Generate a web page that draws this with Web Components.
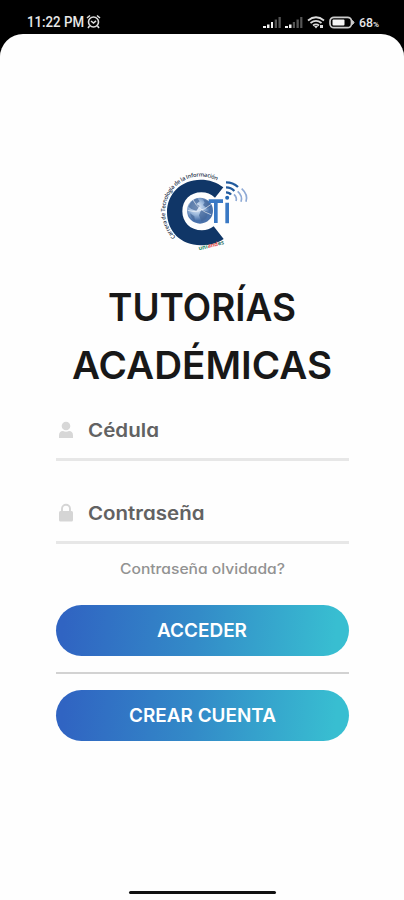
<!DOCTYPE html>
<html lang="es"><head><meta charset="utf-8"><title>Tutorías Académicas</title>
<style>html,body{margin:0;background:#fff}body{width:404px;height:900px;overflow:hidden}</style></head><body>
<login-screen></login-screen>
<script>
const define = (name, html, setup) => customElements.define(name, class extends HTMLElement {
  connectedCallback() {
    if (this.shadowRoot) return;
    const t = document.createElement('template');
    t.innerHTML = html;
    this.attachShadow({mode: 'open'}).append(t.content.cloneNode(true));
    if (setup) setup.call(this, this.shadowRoot);
  }
});

// A line of text set to an exact width; "base" is the baseline inside the box.
define('fit-text', `<style>:host{display:block;flex:none}svg{display:block;overflow:visible}
text{font-family:Inter,"Open Sans",sans-serif;font-feature-settings:"cv11" 1;fill:currentColor}</style>
<svg><text></text></svg>`, function (r) {
  const a = n => this.getAttribute(n), s = r.querySelector('svg'), t = r.querySelector('text');
  s.setAttribute('width', a('w')); s.setAttribute('height', a('h'));
  t.setAttribute('y', a('base')); t.setAttribute('textLength', a('w'));
  t.setAttribute('lengthAdjust', 'spacingAndGlyphs');
  t.style.fontSize = a('size') + 'px'; t.style.fontWeight = a('weight') || 600;
  if (a('face')) t.style.fontFamily = a('face');
  t.textContent = a('text');
});

define('status-bar', `<style>:host{display:flex;box-sizing:border-box;height:34px;padding:13px 25px 0 27px;justify-content:space-between;align-items:flex-start;color:#e8e8e8}
div{display:flex}svg{display:block;flex:none}.l{gap:2px}</style>
<div class="l"><fit-text text="11:22 PM" w="57" h="18" base="14" size="13.8" weight="500" face="Roboto"></fit-text>
<svg width="15" height="18" viewBox="0 0 15 18" fill="none" stroke="#ddd" stroke-width="1.6"><circle cx="7.5" cy="9" r="5"/><path d="M1 5 4 2.5M11 2.5 14 5M3.5 13 2 15M11.5 13l1.500 2M5 8l2.500 2L10 7.800"/></svg></div>
<div><svg width="97" height="18" viewBox="0 0 97 18">
<g fill="#f2f2f2"><path d="M1 13h3v2H1zM5 11.500h2.500V15H5zM9 9h2v6H9zM23 13h3v2h-3zM27 11.500h2.500V15H27z"/></g>
<g fill="#555"><path d="M12.700 6.500h2.300V15h-2.300zM16.500 4h2.300v11h-2.300zM30.800 9H33v6h-2.200zM34.500 6.500h2.300V15h-2.300zM38.200 4h2.200v11h-2.200z"/></g>
<g fill="none" stroke="#ddd" stroke-width="1.800"><path d="M46 7.500Q54 1 62 7.500M48.500 10Q54 5.800 59.500 10M51 12.400Q54 10.200 57 12.400"/></g>
<path d="M52 13h4l-2 2.500zM58 12h3v3h-3z" fill="#ddd"/>
<rect x="68" y="4.300" width="21.500" height="10.400" rx="4" fill="none" stroke="#ccc" stroke-width="1.700"/><rect x="70.500" y="6.500" width="12" height="6" rx="1" fill="#f4f4f4"/><path d="M90.500 7.500q3 2 0 4z" fill="#ccc" stroke="#ccc"/></svg>
<fit-text text="68" w="14" h="18" base="14" size="13" weight="500" face="Roboto"></fit-text><fit-text text="%" w="6" h="18" base="14" size="7" face="Roboto"></fit-text></div>`);

define('cti-logo', `<style>:host{display:block;width:104px;height:100px}svg{display:block;overflow:visible}text{font-family:"Open Sans",sans-serif;font-weight:600}</style>
<svg width="104" height="100" viewBox="0 0 312 300"><defs>
<path id="arc" d="M71 225A106 106 0 0 1 199 58"/>
<radialGradient id="g" cx=".38" cy=".38"><stop offset="0" stop-color="#f1f7ff"/><stop offset=".55" stop-color="#9db9dc"/><stop offset="1" stop-color="#4971aa"/></radialGradient></defs>
<path d="M214 76C195 61 171 53 146 53C87 53 45 96 45 151C45 208 87 250 146 250C173 250 197 243 215 231L185 193C174 201 164 205 150 205C115 205 91 181 91 148C91 114 115 91 148 91C164 91 177 96 189 107Z" fill="#103667"/>
<circle cx="144" cy="146" r="39" fill="url(#g)"/>
<path d="M109 134q10-22 27-25l7 9-10 8 10 6-10 15-15-6zM153 111q19 6 25 22l-12 7-13-11 5-7zM148 143l20 6-5 20-14 11-8-20zM114 154l13 9 2 14q-12-8-15-23z" fill="#46689b" opacity=".75"/>
<path d="M122 112q17 33 55 46M107 145q34 12 69-17" fill="none" stroke="#fff" stroke-width="3" opacity=".6"/>
<path d="M170 112H213V123H197V183H186V123H170ZM220 122H231V184H220Z" fill="#3978c4"/><circle cx="225.500" cy="107" r="6" fill="#2468b4"/>
<g fill="none"><path d="M222 61Q243 61 258 75M222 76Q237 76 247 87M222 91Q232 91 237 98" stroke="#225b9d" stroke-width="7"/><path d="M269 80Q289 98 282 119M257 88Q273 102 267 119M246 97Q256 107 252 117" stroke="#8faad5" stroke-width="5"/></g>
<text font-size="17" fill="#26344c" textLength="302"><textPath href="#arc" textLength="302">Carrera de Tecnología de la Información</textPath></text>
<text font-size="17" x="141" y="265" transform="rotate(-14 141 265)" style="font-weight:700"><tspan fill="#278967">uni</tspan><tspan fill="#e24b4b">and</tspan><tspan fill="#31766b">es</tspan></text></svg>`);

define('form-field', `<style>:host{display:flex;box-sizing:border-box;width:293px;height:47px;border-bottom:3px solid #e7e7e7;color:#626262}
.i{width:32px;flex:none}::slotted(svg){display:block}</style><div class="i"><slot name="icon"></slot></div><slot></slot>`);

define('pill-button', `<style>:host{display:block}button{display:flex;justify-content:center;width:293px;height:51px;padding:0;border:0;border-radius:26px;color:#fff;background:linear-gradient(95deg,#3064c2 3%,#338bc8 48%,#38bed1 95%)}</style><button><slot></slot></button>`);

define('login-screen', `<style>
:host{display:block;width:404px;height:900px;background:linear-gradient(#000 50px,#ddd 60px)}
main{display:flex;flex-direction:column;align-items:center;box-sizing:border-box;height:866px;padding-top:128px;background:#fefefe;border-radius:23px 23px 0 0;overflow:hidden}
cti-logo{margin-left:4px}
h1{margin:22px 0 0;display:flex;flex-direction:column;align-items:center;color:#181818}
form-field{margin-top:14px}form-field+form-field{margin-top:36px}
.forgot{margin-top:14px;color:#929292}.one{margin-top:30px}hr{width:293px;height:2px;border:0;margin:16px 0;background:#d2d2d2}
.nav{width:147px;height:3px;background:#111;border-radius:2px;margin-top:150px;flex:none}
</style><status-bar></status-bar><main><cti-logo></cti-logo>
<h1><fit-text text="TUTORÍAS" w="188" h="58" base="36.500" size="38.500"></fit-text><fit-text text="ACADÉMICAS" w="260" h="58" base="36.500" size="38.500"></fit-text></h1>
<form-field><svg slot="icon" width="19" height="32" viewBox="0 0 19 32" fill="#d7d7d7"><circle cx="10" cy="12" r="4.300"/><path d="M3 24v-2.500Q3 17 7 17q3 1.500 6 0 4 0 4 4.500V24z"/></svg><fit-text text="Cédula" w="71" h="40" base="23" size="18.800"></fit-text></form-field>
<form-field><svg slot="icon" width="19" height="32" viewBox="0 0 19 32"><rect x="3" y="14" width="14" height="10.500" rx="1.500" fill="#d5d5d5"/><path d="M6 15v-3.200a4 4 0 0 1 8 0V15" fill="none" stroke="#d5d5d5" stroke-width="1.900"/></svg><fit-text text="Contraseña" w="116.500" h="40" base="23" size="18.800"></fit-text></form-field>
<fit-text class="forgot" text="Contraseña olvidada?" w="165" h="17" base="15.500" size="13.800" weight="500"></fit-text>
<pill-button class="one"><fit-text text="ACCEDER" w="90" h="51" base="32" size="19"></fit-text></pill-button><hr>
<pill-button><fit-text text="CREAR CUENTA" w="147" h="51" base="32" size="19"></fit-text></pill-button><div class="nav"></div></main>`);
</script></body></html>
